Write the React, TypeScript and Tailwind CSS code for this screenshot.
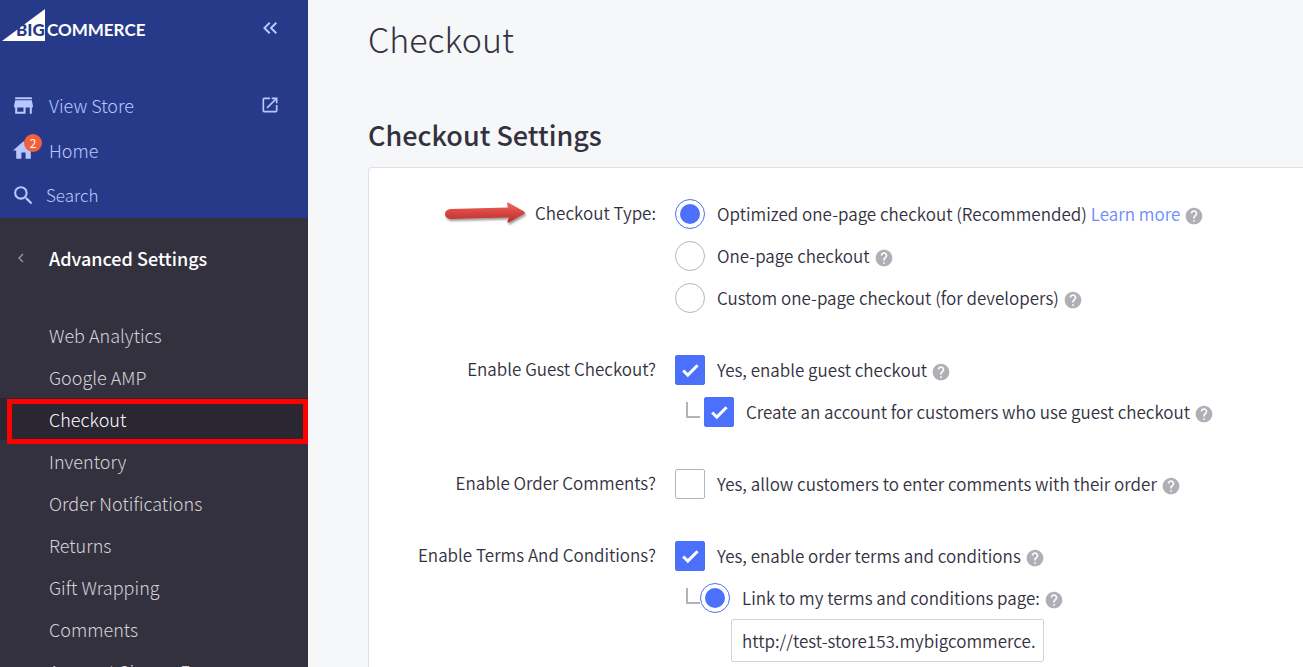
import type { InputHTMLAttributes, ReactNode } from "react";
import {
  MdChevronLeft,
  MdHelp,
  MdHome,
  MdKeyboardDoubleArrowLeft,
  MdOpenInNew,
  MdSearch,
  MdStore,
} from "react-icons/md";

const menu = [
  "Web Analytics",
  "Google AMP",
  "Checkout",
  "Inventory",
  "Order Notifications",
  "Returns",
  "Gift Wrapping",
  "Comments",
  "Account Signup Form",
];

const Logo = () => (
  <svg width="148" height="34" viewBox="0 0 148 34" role="img" aria-label="BigCommerce">
    <path d="M1 33L44 1v32z" fill="#fff" />
    <text x="15" y="28" fontFamily="Lato, sans-serif" fontWeight="900" fontSize="17" fill="#273a8a">
      BIG
    </text>
    <text x="46" y="28" fontFamily="Lato, sans-serif" fontWeight="700" fontSize="17" fill="#fff">
      COMMERCE
    </text>
  </svg>
);

const Arrow = () => (
  <svg width="83" height="26" viewBox="0 0 83 26" aria-hidden="true" className="shrink-0">
    <defs>
      <linearGradient id="arrow" x1="0" y1="0" x2="0" y2="1">
        <stop offset="0" stopColor="#ea6a66" />
        <stop offset="0.5" stopColor="#d94441" />
        <stop offset="1" stopColor="#b23331" />
      </linearGradient>
      <filter id="arrow-shadow" x="-10%" y="-20%" width="120%" height="160%">
        <feDropShadow dx="1" dy="2" stdDeviation="1" floodColor="#000" floodOpacity="0.4" />
      </filter>
    </defs>
    <path
      d="M6 9L64 7.500L63 3.500Q63 2 65 3L80 11.500Q82 13 80 14L65 22.500Q63 23 63.500 21L65 17.500L6 19Q1 18 1 14Q1 10 6 9z"
      fill="url(#arrow)"
      filter="url(#arrow-shadow)"
    />
  </svg>
);

const Help = () => (
  <button type="button" aria-label="Help" className="mt-1 ml-1 text-[#b0afb6]">
    <MdHelp size={20} />
  </button>
);

const Elbow = () => (
  <span className="mb-1 ml-[11px] h-4 w-3.5 shrink-0 border-b-2 border-l-2 border-[#b4b4b4]" />
);

const Radio = (props: InputHTMLAttributes<HTMLInputElement>) => (
  <input
    type="radio"
    className="size-[30px] shrink-0 appearance-none rounded-full border border-[#b3b5c2] bg-white bg-clip-content p-1 checked:border-[#4b71fc] checked:bg-[#4b71fc]"
    {...props}
  />
);

const Checkbox = (props: InputHTMLAttributes<HTMLInputElement>) => (
  <span className="grid size-[30px] shrink-0 place-items-center">
    <input
      type="checkbox"
      className="peer col-start-1 row-start-1 size-[30px] appearance-none rounded-xs border border-[#b3b5c2] bg-white checked:border-[#4b71fc] checked:bg-[#4b71fc]"
      {...props}
    />
    <svg
      width="30"
      height="30"
      viewBox="0 0 30 30"
      aria-hidden="true"
      className="pointer-events-none invisible col-start-1 row-start-1 peer-checked:visible"
    >
      <path d="M8.200 15.500l4.600 4.600L22.600 10.300" fill="none" stroke="#fff" strokeWidth="3" />
    </svg>
  </span>
);

const Row = ({ children }: { children: ReactNode }) => (
  <div className="flex h-[42px] items-center">{children}</div>
);

const Option = ({ control, children }: { control: ReactNode; children: ReactNode }) => (
  <label className="flex items-center gap-3 whitespace-nowrap">
    {control}
    <span>{children}</span>
  </label>
);

type GroupProps = { id: string; title: string; marker?: ReactNode; role?: string; children: ReactNode };

const Group = ({ id, title, marker, role = "group", children }: GroupProps) => (
  <div role={role} aria-labelledby={id} className="flex gap-[19px]">
    <div className="flex h-10 w-[287px] shrink-0 items-center justify-end gap-2 whitespace-nowrap">
      {marker}
      <span id={id}>{title}</span>
    </div>
    <div>{children}</div>
  </div>
);

const Sidebar = () => (
  <aside className="w-[308px] shrink-0 bg-[#34313f] text-lg leading-6 font-light">
    <div className="h-[218px] bg-[#273a8a] text-[#b9c7ff]">
      <div className="flex items-start justify-between pt-2 pr-[26px] pl-px">
        <Logo />
        <button type="button" aria-label="Collapse menu" className="mt-2">
          <MdKeyboardDoubleArrowLeft size={24} />
        </button>
      </div>
      <nav className="mt-10">
        <a href="#store" className="flex h-[46px] items-center pr-7 pl-[11px]">
          <MdStore size={25} />
          <span className="ml-[13px] flex-1">View Store</span>
          <MdOpenInNew size={20} />
        </a>
        <a href="#home" className="flex h-11 items-center pl-[11px]">
          <span className="relative">
            <MdHome size={25} />
            <span className="absolute -top-1 left-[13px] grid size-[18px] place-items-center rounded-full bg-[#f3603c] text-xs font-normal text-white">
              2
            </span>
          </span>
          <span className="ml-[13px]">Home</span>
        </a>
        <a href="#search" className="flex h-[46px] items-center pl-[11px]">
          <MdSearch size={25} />
          <span className="ml-2.5 text-[17px]">Search</span>
        </a>
      </nav>
    </div>
    <a href="#settings" className="flex h-20 items-center pl-3 font-medium text-white">
      <MdChevronLeft size={18} className="text-[#8f8d97]" />
      <span className="ml-[19px]">Advanced Settings</span>
    </a>
    <nav className="mt-4 text-[#d5d4da]">
      {menu.map((item) =>
        item === "Checkout" ? (
          <a
            key={item}
            href="#checkout"
            aria-current="page"
            className="relative flex h-[42px] items-center bg-[#2a2733] pl-[49px] text-white"
          >
            {item}
            <span className="absolute top-px right-0 -bottom-1 left-[7px] border-5 border-[#fe0000]" />
          </a>
        ) : (
          <a key={item} href="#item" className="flex h-[42px] items-center pl-[49px]">
            {item}
          </a>
        ),
      )}
    </nav>
  </aside>
);

export default function App() {
  return (
    <div className="flex h-screen overflow-hidden bg-[#f6f7f9] font-['Noto_Sans_CJK_SC','Source_Sans_Pro',sans-serif] text-[#34313f]">
      <Sidebar />
      <main className="min-w-0 flex-1 pt-3.5 pl-[60px] text-[17px] leading-6 font-[350]">
        <h1 className="text-[34px] leading-[50px] font-light">Checkout</h1>
        <h2 className="mt-[51px] text-[27px] leading-10 font-medium">Checkout Settings</h2>
        <form className="mt-3 flex h-full flex-col gap-[30px] rounded-tl-sm border-t border-l border-[#dfe1e9] bg-white pt-[25px]">
          <Group id="type" title="Checkout Type:" marker={<Arrow />} role="radiogroup">
            <Row>
              <Option control={<Radio name="type" defaultChecked />}>
                Optimized one-page checkout (Recommended)
              </Option>
              <a href="#learn" className="ml-1 whitespace-nowrap text-[#6e8cfc]">
                Learn more
              </a>
              <Help />
            </Row>
            <Row>
              <Option control={<Radio name="type" />}>One-page checkout</Option>
              <Help />
            </Row>
            <Row>
              <Option control={<Radio name="type" />}>Custom one-page checkout (for developers)</Option>
              <Help />
            </Row>
          </Group>
          <Group id="guest" title="Enable Guest Checkout?">
            <Row>
              <Option control={<Checkbox defaultChecked />}>Yes, enable guest checkout</Option>
              <Help />
            </Row>
            <Row>
              <Elbow />
              <div className="ml-1">
                <Option control={<Checkbox defaultChecked />}>
                  Create an account for customers who use guest checkout
                </Option>
              </div>
              <Help />
            </Row>
          </Group>
          <Group id="comments" title="Enable Order Comments?">
            <Row>
              <Option control={<Checkbox />}>Yes, allow customers to enter comments with their order</Option>
              <Help />
            </Row>
          </Group>
          <Group id="terms" title="Enable Terms And Conditions?">
            <Row>
              <Option control={<Checkbox defaultChecked />}>Yes, enable order terms and conditions</Option>
              <Help />
            </Row>
            <Row>
              <Elbow />
              <Option control={<Radio name="terms" defaultChecked />}>Link to my terms and conditions page:</Option>
              <Help />
            </Row>
            <input
              type="text"
              aria-label="Terms and conditions page"
              defaultValue="http://test-store153.mybigcommerce."
              className="ml-14 h-[43px] w-[313px] rounded-xs border border-[#d3d4da] bg-white pr-1 pl-2.5"
            />
          </Group>
        </form>
      </main>
    </div>
  );
}
